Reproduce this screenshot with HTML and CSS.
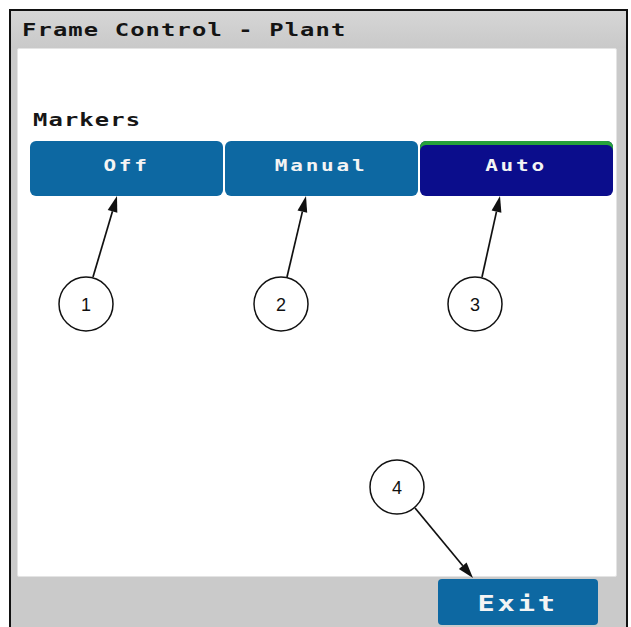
FILE: index.html
```html
<!DOCTYPE html>
<html lang="en">

<head>
    <meta charset="UTF-8">
    <title>Frame Control - Plant</title>
    <link rel="stylesheet" href="styles.css">
</head>

<body>
    <div class="frame">
        <div class="titlebar"><span class="wide">Frame Control - Plant</span></div>

        <div class="panel">
            <div class="label"><span class="wide">Markers</span></div>
            <div class="modes">
                <button class="mode"><span class="wide">Off</span></button>
                <button class="mode"><span class="wide">Manual</span></button>
                <button class="mode active"><span class="wide">Auto</span></button>
            </div>
        </div>

        <div class="footer">
            <button class="exit"><span class="wide">Exit</span></button>
        </div>
    </div>

    <!-- callouts drawn over the screen -->
    <svg class="callouts" width="631" height="627" viewBox="0 0 631 627">
        <g class="lines">
            <line x1="93" y1="277" x2="112.5" y2="211.3" />
            <line x1="287" y1="277" x2="302.4" y2="211.6" />
            <line x1="482" y1="277" x2="496.5" y2="211.6" />
            <line x1="415" y1="508" x2="462.8" y2="565.7" />
        </g>
        <g class="heads">
            <polygon points="117,196 117.3,212.7 107.7,209.9" />
            <polygon points="306,196 307.2,212.7 297.5,210.4" />
            <polygon points="500,196 501.4,212.7 491.6,210.5" />
            <polygon points="473,578 466.6,562.5 458.9,568.9" />
        </g>
        <g class="rings">
            <circle cx="86" cy="304" r="27" />
            <circle cx="281" cy="304" r="27" />
            <circle cx="475" cy="304" r="27" />
            <circle cx="397" cy="487" r="27" />
        </g>
        <g class="nums">
            <text x="86" y="311">1</text>
            <text x="281" y="311">2</text>
            <text x="475" y="311">3</text>
            <text x="397" y="494">4</text>
        </g>
    </svg>
</body>

</html>
```

FILE: styles.css
```css
html,
body {
    margin: 0;
    height: 627px;
    overflow: hidden;
    background: #ffffff;
}

body {
    position: relative;
    font-family: "DejaVu Sans Mono", "Liberation Mono", monospace;
    font-weight: bold;
}

.wide {
    display: inline-block;
    transform: scaleX(1.4);
    transform-origin: left center;
}

.frame {
    margin: 9px 0 0 9px;
    width: 615px;
    height: 640px;
    border: 2px solid #111111;
    border-bottom: none;
    background: #cacaca;
    display: flex;
    flex-direction: column;
}

.titlebar {
    height: 20px;
    padding: 9px 11px 8px 11px;
    font-size: 17px;
    line-height: 20px;
    letter-spacing: 0.8px;
    color: #141414;
    background: linear-gradient(#d6d6d6, #c9c9c9);
}

.panel {
    height: 466px;
    margin: 0 9px 0 6px;
    padding: 61px 3px 0 12px;
    background: #ffffff;
    border: 1px solid #e4e4e4;
    border-radius: 2px;
}

.label {
    padding-left: 3px;
    font-size: 17px;
    line-height: 20px;
    letter-spacing: 0.8px;
    color: #161616;
}

.modes {
    margin-top: 11px;
    display: grid;
    grid-template-columns: 1fr 1fr 1fr;
    gap: 2px;
}

button {
    font-family: inherit;
    font-weight: bold;
    border: none;
    color: #f4f4f4;
    cursor: pointer;
}

.mode {
    height: 55px;
    padding: 16px 0 0 0;
    display: flex;
    justify-content: center;
    align-items: flex-start;
    font-size: 15px;
    line-height: 18px;
    letter-spacing: 2px;
    background: #0d68a2;
    border-radius: 6px;
}

.mode .wide,
.exit .wide {
    transform-origin: center;
}

.mode.active {
    background: #0b0d8c;
    box-shadow: inset 0 4px 0 #26a23a;
}

.footer {
    flex: 1;
    display: flex;
    justify-content: flex-end;
    padding: 2px 28px 0 0;
}

.exit {
    width: 160px;
    height: 46px;
    padding: 13px 0 0 0;
    display: flex;
    justify-content: center;
    align-items: flex-start;
    font-size: 20.5px;
    line-height: 24px;
    letter-spacing: 2px;
    background: #0d68a2;
    border-radius: 4px;
}

.callouts {
    position: absolute;
    left: 0;
    top: 0;
    pointer-events: none;
}

.lines line {
    stroke: #111111;
    stroke-width: 1.7;
}

.heads polygon {
    fill: #111111;
}

.rings circle {
    fill: #ffffff;
    stroke: #111111;
    stroke-width: 1.5;
}

.nums text {
    font-family: "Liberation Sans", Arial, sans-serif;
    font-weight: normal;
    font-size: 18px;
    text-anchor: middle;
    fill: #111111;
}
```
